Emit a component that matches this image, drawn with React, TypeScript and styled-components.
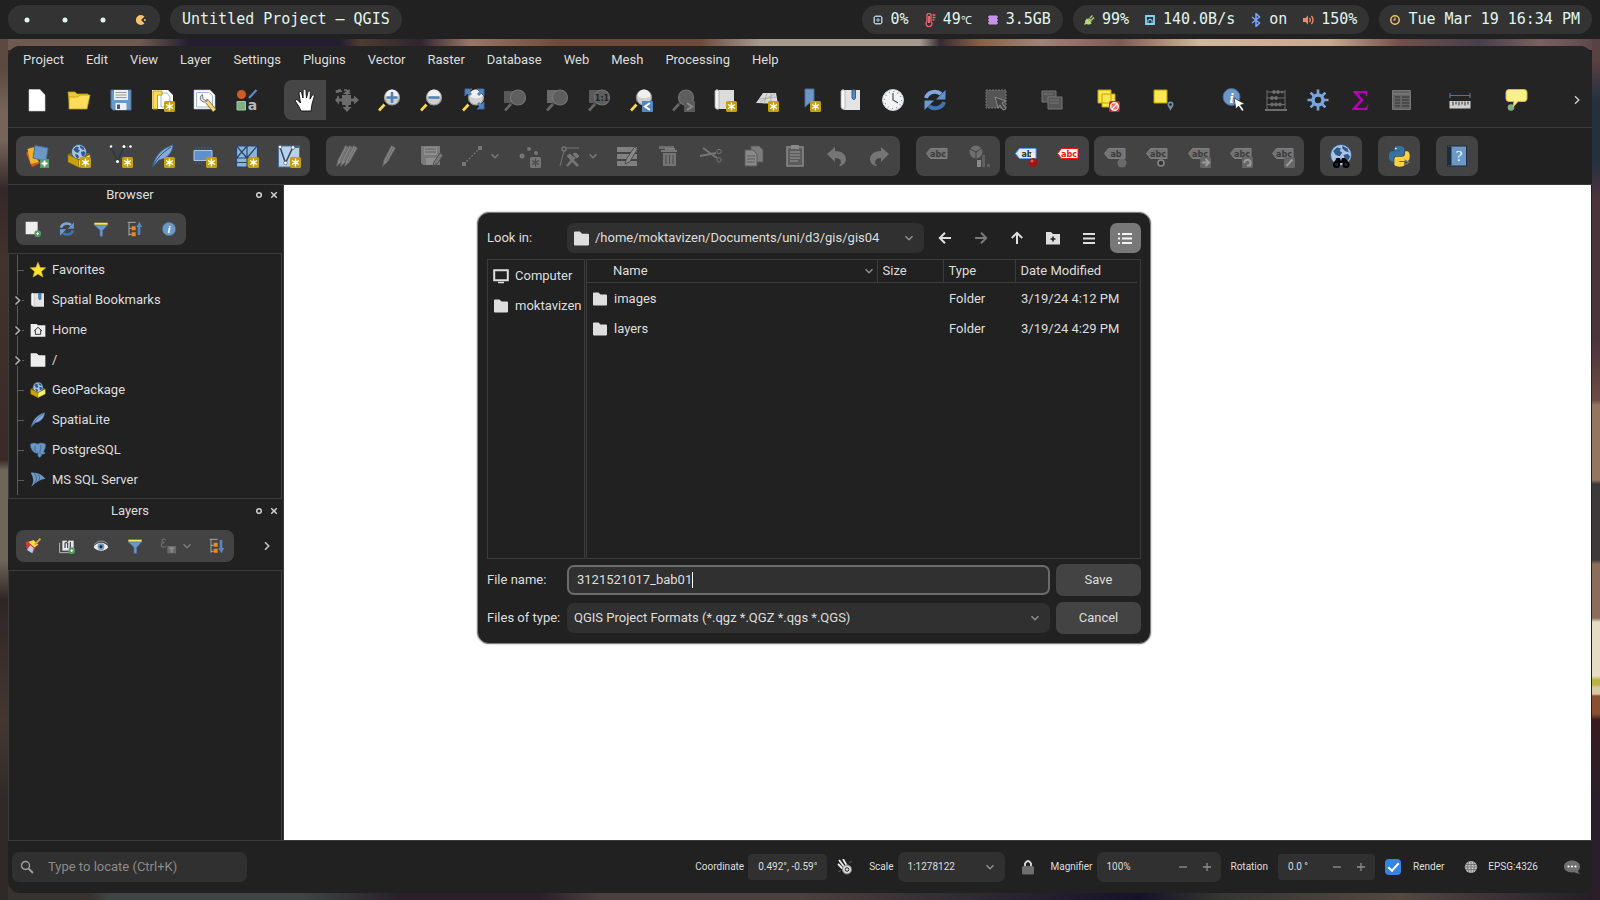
import React, { ReactNode, useState } from "react";
import styled, { createGlobalStyle } from "styled-components";

const UI = 'Roboto, "Open Sans", sans-serif';
const MONO = '"DejaVu Sans Mono", "Liberation Mono", monospace';

const c = {
  base: "#212121",
  raised: "#242424",
  group: "#434343",
  field: "#303030",
  line: "#3c3c3c",
  text: "#dedede",
};

const Global = createGlobalStyle`
  *, *::before, *::after { box-sizing: border-box; }
  body { margin: 0; background: #2c2726; color: ${c.text}; font: 13px/20px ${UI}; }
  button, input, select { font: inherit; color: inherit; margin: 0; }
  ul { list-style: none; margin: 0; padding: 0; }
`;

/* ---------- desktop and top bar ---------- */

const Desktop = styled.div`
  min-height: 100vh;
  display: flex;
  flex-direction: column;
  background:
    linear-gradient(#5a4144 0 60px, #25303f 100px 160px, #4c343c 200px 340px, #6b4c46 400px, #957562 405px 480px, #3d3a3c 484px 560px, #8c6c5c 564px 618px, #e5dcc6 622px 676px, #b8b040 680px 684px, #d8c8a8 688px 694px, #8a5030 696px 714px, #3a1a20 720px, #2a1f28 790px 100%) right / 8px 100% no-repeat,
    linear-gradient(#5c4a40 0 70px, #77635a 110px 140px, #33282a 190px, #43322d 260px, #3a2a28 460px, #6f665a 470px 560px, #2e2626 600px, #443732 720px, #2f2a28 800px 100%) left / 8px 100% no-repeat,
    linear-gradient(90deg, #6f5a52 0 140px, #221d30 190px 340px, #4d3c32 360px, #2e2530 420px, #9a7568 470px, #6d4a3c 560px 700px, #a59a90 760px 920px, #352b33 940px, #8a6046 980px, #a08478 1040px, #7c5a52 1120px, #d0b89c 1200px, #c8a890 1330px, #71504a 1400px, #45404a 1480px, #7b6160 1540px, #59444a 100%) top / 100% 50px no-repeat,
    linear-gradient(90deg, #38322f 0 90px, #3d4644 110px 300px, #2b1f2a 400px 540px, #4a403e 600px, #4b403c 800px, #17122a 1140px, #35352f 1220px, #54483f 1400px, #3a3035 1500px, #251d25 100%);
`;

const TopBar = styled.header`
  display: flex;
  justify-content: space-between;
  height: 39px;
  padding: 5px 8px;
  background: ${c.base};
  color: #e0f6f0;
  font: 15px/29px ${MONO};
`;

const PillRow = styled.div`
  display: flex;
  gap: 10px;
`;

const Pill = styled.div`
  display: flex;
  gap: 14px;
  height: 29px;
  padding: 0 12px 0 9px;
  border-radius: 15px;
  background: #333333;
  white-space: nowrap;
`;

const TitlePill = styled(Pill)`
  padding: 0 12px;
`;

const Workspaces = styled.nav`
  display: grid;
  grid-template-columns: repeat(4, 38px);
  height: 29px;
  border-radius: 15px;
  background: #333333;
`;

const Workspace = styled.button`
  display: grid;
  place-items: center;
  padding: 0;
  border: 0;
  background: none;
`;

const Reading = styled.span`
  display: flex;
  align-items: center;
  gap: 6px;
`;

const Unit = styled.span`
  font-size: 11px;
`;

/* ---------- application window ---------- */

const Window = styled.main`
  position: relative;
  flex: 1;
  display: flex;
  flex-direction: column;
  margin: 7px 8px;
  border-radius: 12px;
  background: ${c.base};
  overflow: hidden;
`;

const WindowHead = styled.div`
  background: ${c.raised};
  border-bottom: 1px solid ${c.line};
`;

const MenuBar = styled.nav`
  display: flex;
  align-items: flex-start;
  padding: 4px 0 0 4px;
  height: 30px;
`;

const MenuItem = styled.button`
  padding: 0 11px;
  border: 0;
  background: none;
  line-height: 20px;
`;

const MainTools = styled.div`
  display: flex;
  gap: 14px;
  height: 51px;
  padding: 4px 8px 7px;
  align-items: flex-start;
`;

const Cluster = styled.div<{ $lead?: number }>`
  display: flex;
  margin-left: ${(p) => p.$lead ?? 0}px;
`;

const EndSlot = styled.div`
  margin-left: auto;
  align-self: center;
`;

const toolWidth = { small: 34, narrow: 14, menu: 56, normal: 42 };

const Tool = styled.button<{ $active?: boolean; $size?: "small" | "narrow" | "menu" }>`
  display: flex;
  align-items: center;
  justify-content: center;
  gap: 6px;
  width: ${(p) => toolWidth[p.$size ?? "normal"]}px;
  height: ${(p) => (p.$size === "small" || p.$size === "narrow" ? 32 : 40)}px;
  padding: 0;
  border: 0;
  border-radius: ${(p) => (p.$active ? "8px 0 0 8px" : "8px")};
  background: ${(p) => (p.$active ? "#464646" : "none")};
`;

const ExpressionTool = styled(Tool)`
  width: 48px;
  height: 32px;
`;

const GroupRow = styled.div`
  display: flex;
  gap: 16px;
  padding: 8px;
  border-bottom: 1px solid ${c.line};
`;

const LabelGroups = styled.div`
  display: flex;
  gap: 5px;
`;

const Group = styled.div`
  display: flex;
  border-radius: 8px;
  background: ${c.group};
`;

const Body = styled.div`
  flex: 1;
  display: flex;
`;

const Side = styled.aside`
  width: 276px;
  flex: none;
  display: flex;
  flex-direction: column;
  padding-right: 1px;
  border-right: 1px solid ${c.line};
`;

const Canvas = styled.section`
  flex: 1;
  margin-right: 1px;
  background: #ffffff;
`;

/* ---------- docks ---------- */

const DockHead = styled.div<{ $tall?: boolean }>`
  display: flex;
  align-items: center;
  gap: 1px;
  height: ${(p) => (p.$tall ? 28 : 31)}px;
  padding: 0 1px 8px 0;
`;

const DockTitle = styled.h2`
  flex: 1;
  margin: 0;
  padding-left: 1px;
  font: 13px/20px ${UI};
  text-align: center;
`;

const DockTools = styled.div`
  display: flex;
  align-items: center;
  padding: 0 8px 8px;
`;

const Tree = styled.ul`
  height: 246px;
  overflow: hidden;
  border: 1px solid ${c.line};
  padding-top: 1px;
`;

const Node = styled.li`
  display: flex;
  align-items: center;
  gap: 6px;
  height: 30px;
  line-height: 20px;
  white-space: nowrap;
`;

const NodeIcon = styled.span`
  display: flex;
`;

const LayerList = styled.div`
  flex: 1;
  border: 1px solid ${c.line};
  border-bottom: 0;
`;

/* ---------- status bar ---------- */

const StatusBar = styled.footer`
  display: flex;
  align-items: center;
  height: 53px;
  padding: 0 12px 0 4px;
  border-top: 1px solid ${c.line};
  font-size: 10px;
`;

const Locator = styled.label`
  display: flex;
  align-items: center;
  gap: 14px;
  width: 235px;
  height: 30px;
  padding: 0 8px;
  border-radius: 7px;
  background: ${c.field};
  font-size: 13px;
`;

const PlainInput = styled.input`
  flex: 1;
  min-width: 0;
  padding: 0;
  border: 0;
  outline: 0;
  background: none;
  &::placeholder { color: #8b8b8b; opacity: 1; }
`;

const StatusItems = styled.div`
  display: flex;
  align-items: center;
  gap: 10px;
  margin-left: auto;
`;

const StatusField = styled.label<{ $lead?: boolean; $wide?: boolean }>`
  display: flex;
  align-items: center;
  gap: ${(p) => (p.$wide ? 10 : 4)}px;
  margin-left: ${(p) => (p.$lead ? 6 : 0)}px;
`;

const StatusBox = styled.span<{ $w: "s" | "m" | "l" | "xl"; $low?: boolean }>`
  display: flex;
  align-items: center;
  width: ${(p) => ({ s: 79, m: 97, l: 107, xl: 124 })[p.$w]}px;
  height: ${(p) => (p.$low ? 26 : 30)}px;
  padding: 0 10px;
  border-radius: ${(p) => (p.$low ? 4 : 7)}px;
  background: ${c.field};
`;

const StepButton = styled.button`
  display: grid;
  place-items: center;
  width: 24px;
  height: 24px;
  padding: 0;
  border: 0;
  background: none;
  &:last-child { margin-right: -8px; }
`;

const GhostButton = styled.button<{ $lead?: number }>`
  display: flex;
  align-items: center;
  gap: 10px;
  padding: 0;
  margin-left: ${(p) => p.$lead ?? 0}px;
  border: 0;
  background: none;
`;

const Check = styled.input`
  appearance: none;
  width: 16px;
  height: 16px;
  border-radius: 4px;
  background: #3584e4;
  display: grid;
  place-items: center;
  &:checked::before {
    content: "";
    width: 11px;
    height: 6px;
    margin-top: -3px;
    border: solid #ffffff;
    border-width: 0 0 2px 2px;
    transform: rotate(-48deg);
  }
`;

const RenderLabel = styled.label`
  display: flex;
  align-items: center;
  gap: 12px;
  margin-right: 10px;
`;

/* ---------- file dialog ---------- */

const Dialog = styled.div`
  position: absolute;
  top: 166px;
  left: 469px;
  width: 674px;
  display: flex;
  flex-direction: column;
  padding: 10px 9px 9px;
  border: 1px solid #808080;
  border-radius: 12px;
  background: ${c.base};
  box-shadow: 0 0 2px rgba(0, 0, 0, 0.4);
`;

const LookRow = styled.div`
  display: flex;
  align-items: center;
  height: 30px;
`;

const RowLabel = styled.label`
  width: 80px;
  white-space: nowrap;
`;

const Combo = styled.div<{ $grow?: boolean }>`
  display: flex;
  align-items: center;
  gap: 6px;
  width: ${(p) => (p.$grow ? "auto" : "357px")};
  height: 30px;
  padding: 0 10px 0 7px;
  border-radius: 7px;
  background: ${c.field};
`;

const Select = styled.select`
  appearance: none;
  flex: 1;
  min-width: 0;
  padding: 0;
  border: 0;
  outline: 0;
  background: none;
`;

const NavButtons = styled.div`
  display: flex;
  flex: 1;
  justify-content: space-between;
  padding-left: 5px;
`;

const NavButton = styled.button<{ $on?: boolean }>`
  display: grid;
  place-items: center;
  width: 31px;
  height: 30px;
  padding: 0;
  border: 0;
  border-radius: 7px;
  background: ${(p) => (p.$on ? "#787878" : "none")};
`;

const Panes = styled.div`
  display: grid;
  grid-template-columns: 98px 1fr;
  gap: 1px;
  height: 300px;
  margin: 6px 0 5px;
`;

const Places = styled.ul`
  border: 1px solid ${c.line};
  padding-top: 1px;
  overflow: hidden;
`;

const Place = styled.li`
  display: flex;
  align-items: center;
  gap: 6px;
  height: 30px;
  padding-left: 5px;
  line-height: 20px;
`;

const PlaceIcon = styled.span`
  display: grid;
  place-items: center;
  width: 16px;
`;

const FilePane = styled.div`
  border: 1px solid ${c.line};
  padding-right: 3px;
`;

const Files = styled.table`
  width: 100%;
  border-collapse: collapse;
  table-layout: fixed;
  line-height: 20px;
`;

const Th = styled.th<{ $w?: number }>`
  width: ${(p) => (p.$w ? `${p.$w}px` : "auto")};
  height: 22px;
  padding: 1px 0 0 5px;
  border-bottom: 1px solid ${c.line};
  border-right: 1px solid ${c.line};
  font-weight: 400;
  text-align: left;
  &:last-child { border-right: 0; }
`;

const NameHead = styled.span`
  display: flex;
  align-items: center;
  justify-content: space-between;
  padding: 0 3px 0 21px;
`;

const Td = styled.td`
  height: 30px;
  padding: 3px 0 0 6px;
  white-space: nowrap;
`;

const FileName = styled.span`
  display: flex;
  align-items: center;
  gap: 7px;
`;

const Form = styled.form`
  display: grid;
  grid-template-columns: 80px 1fr 91px;
  row-gap: 6px;
  align-items: center;
`;

const NameField = styled.div`
  display: flex;
  align-items: center;
  height: 30px;
  padding: 0 8px;
  border: 2px solid #6b6b6b;
  border-radius: 7px;
  background: ${c.field};
`;

const NameInput = styled.input`
  field-sizing: content;
  padding: 0;
  border: 0;
  outline: 0;
  background: none;
`;

const Caret = styled.span`
  width: 1px;
  height: 16px;
  background: #ffffff;
`;

const FormButton = styled.button`
  height: 32px;
  margin-left: 6px;
  border: 0;
  border-radius: 7px;
  background: ${c.group};
`;

/* ---------- icons ---------- */

const Glyph = styled.svg`
  display: block;
  flex: none;
`;

function Ico({ s = 24, h, box = 24, boxH, children }: { s?: number; h?: number; box?: number; boxH?: number; children: ReactNode }) {
  return (
    <Glyph width={s} height={h ?? s} viewBox={`0 0 ${box} ${boxH ?? box}`} fill="none" aria-hidden="true">
      {children}
    </Glyph>
  );
}

const Chevron = ({ dir = "down", color = "#8e8e8e", s = 10 }: { dir?: "down" | "right"; color?: string; s?: number }) => (
  <Ico s={s} box={10}>
    <path d={dir === "down" ? "M1.5 3.2 5 6.7l3.5-3.5" : "M3 1.2 6.8 5 3 8.8"} stroke={color} strokeWidth="1.5" />
  </Ico>
);

const Badge = () => (
  <g>
    <rect x="13" y="13" width="11" height="11" rx="1.5" fill="#c4a000" />
    <path d="M18.5 14.5v8M15 16.5l7 4M22 16.5l-7 4" stroke="#fff" strokeWidth="1.4" />
    <circle cx="18.5" cy="18.5" r="1.9" fill="#fff" />
  </g>
);

const Lens = ({ dim, sign }: { dim?: boolean; sign?: string }) => (
  <g>
    <path d="m2 22.5 6-6.500" stroke={dim ? "#666" : "#fcd94e"} strokeWidth="2.6" />
    <path d="m7.500 16.5 2.500-2.500" stroke={dim ? "#4a4a4a" : "#111"} strokeWidth="2.6" />
    <circle cx="15" cy="9.5" r="7.5" fill={dim ? "#5e5e5e" : "#cfcfcf"} stroke={dim ? "#747474" : "#9b9b9b"} strokeWidth="1.2" />
    {!dim && <path d="M8.500 8a6.500 6.500 0 0 1 13 0c-3 3-9 3-13 0z" fill="#f0f0f0" />}
    {sign && <path d={sign} stroke="#4e7fb5" strokeWidth="2.6" />}
  </g>
);

const Globe = ({ x, y, r }: { x: number; y: number; r: number }) => (
  <g>
    <circle cx={x} cy={y} r={r} fill="#a9c6e6" stroke="#2f4f77" strokeWidth="0.8" />
    <path
      transform={`translate(${x - r} ${y - r}) scale(${r / 8})`}
      d="M2 5l3-3 3 1-1 2 2 1-2 3-3-1zM9 1l4 2 1 3-3-1-2-2zM4 10l3 1 1 3-2 1-2-3zM10 8l3-1 2 2-2 4-2-1z"
      fill="#335a8a"
    />
  </g>
);

const Refresh = () => (
  <g>
    <path d="M3 10a9 8 0 0 1 15-4" stroke="#7fa8d8" strokeWidth="4" />
    <path d="M22.500 2v9.500h-9.500z" fill="#5f92cc" />
    <path d="M21 14a9 8 0 0 1-15 4" stroke="#3d74b4" strokeWidth="4" />
    <path d="M1.500 22v-9.500H11z" fill="#6a9ad2" />
  </g>
);

const Funnel = () => (
  <g>
    <path d="M2 6h20l-7.500 8v9h-4v-9z" fill="#6d97c4" stroke="#45719f" />
    <path d="M2 2.500h20v3H2z" fill="#fce94f" />
  </g>
);

const Info = () => (
  <g>
    <circle cx="12" cy="12" r="10" fill="#6d97c4" stroke="#3f6a9e" />
    <text x="12" y="18" fontSize="17" fontStyle="italic" fontWeight="700" textAnchor="middle" fill="#fff" fontFamily="Liberation Serif">i</text>
  </g>
);

const Folder = ({ color = "#dedede", s = 14 }: { color?: string; s?: number }) => (
  <Ico s={s} box={14}>
    <path d="M0 1.500Q0 .5 1 .5h4.500l2 2H13q1 0 1 1v9q0 1-1 1H1q-1 0-1-1z" fill={color} />
  </Ico>
);

const Feather = () => (
  <g>
    <path d="M1.500 23C4 13 9 5 22 1c-1 8-5 13-14 15z" fill="#86acd6" stroke="#3d6a9c" strokeWidth="0.9" />
    <path d="M1.500 23C6 14 11 9 20 3" stroke="#2c527f" />
  </g>
);

const Gpkg = () => (
  <g>
    <path d="m1 10 11-4 11 4-11 6z" fill="#8a7000" />
    <Globe x={12} y={8} r={7.5} />
    <path d="m1 10.500 11 5.500v7.500L1 18z" fill="#c9a20a" stroke="#8a7000" strokeWidth=".6" />
    <path d="m23 10.500-11 5.500v7.500L23 18z" fill="#fcf36a" stroke="#8a7000" strokeWidth=".6" />
  </g>
);

const Pencil = ({ x = 0 }: { x?: number }) => (
  <g transform={`translate(${x} 0)`}>
    <path d="m4.500 22.500 1.500-6.500L13.500 1.500l4 2.500-8 14z" fill="#868686" stroke="#606060" strokeWidth=".8" />
    <path d="M8 17 15 3.500" stroke="#6a6a6a" />
  </g>
);

const Tag = ({ fill = "#747474", ink = "#3c3c3c", edge = "#808080", label = "abc" }: { fill?: string; ink?: string; edge?: string; label?: string }) => (
  <g>
    <path d="m1.500 9.500 4-5H22v10H5.500z" fill={fill} stroke={edge} />
    <text x="13" y="12.500" fontSize="8" fontWeight="700" textAnchor="middle" fill={ink} fontFamily="DejaVu Sans">{label}</text>
  </g>
);

const Corner = ({ d }: { d: string }) => (
  <g>
    <rect x="13" y="13" width="11" height="11" rx="1.5" fill="#666" />
    <path d={d} stroke="#9c9c9c" strokeWidth="2" />
  </g>
);

const G = "#757575";

const icons: Record<string, ReactNode> = {
  new: <path d="M4 1.500h11L20 7v16H4z" fill="#fff" stroke="#cfcfcf" strokeWidth=".6" />,
  open: (
    <g stroke="#c4a000" strokeWidth=".8">
      <path d="M1 4h7l2 2h11v5H3v9z" fill="#e8c840" />
      <path d="M2 21V9h9l2-2h10l-3 14z" fill="#fcdc5a" />
    </g>
  ),
  save: (
    <g>
      <path d="M2 2h20v20H4l-2-2z" fill="#6d97c4" stroke="#4a719b" />
      <path d="M5 2h14v10H5zM6.500 15h11v7h-11z" fill="#eee" />
      <path d="M6.500 4.500h11M6.500 7h11M6.500 9.500h11" stroke="#9a9a9a" />
      <path d="M8 16.500h3V21H8z" fill="#3b5f88" />
    </g>
  ),
  layout: (
    <g>
      <path d="M1 2h16l5 5v14H1z" fill="#fff" />
      <path d="M10 5h6l3 4v10h-9z" stroke="#9db7dc" />
      <path d="M2 3h9v4H6.500v14H2z" fill="#fcdc5a" stroke="#c4a000" />
      <Badge />
    </g>
  ),
  manager: (
    <g>
      <path d="M1 2h16l5 5v14H1z" fill="#fff" stroke="#bbb" strokeWidth=".6" />
      <path d="M3.500 4.500h13l3 3V19h-16z" stroke="#9db7dc" />
      <path d="M9.500 6.500a4 4 0 1 0 5.500 5l-3 1-2-2z" fill="#ddd" stroke="#777" />
      <path d="m14 13.500 7.500 9" stroke="#8c7020" strokeWidth="4.400" />
      <path d="m14 13.500 7.500 9" stroke="#efd98a" strokeWidth="3" />
    </g>
  ),
  style: (
    <g>
      <circle cx="6.5" cy="6.5" r="4.5" fill="#cf5b26" />
      <path d="m14 10 7.500-8" stroke="#5b8cc5" strokeWidth="2.2" />
      <path d="M2 13.500h8.500v8.500H2z" fill="#7fae80" stroke="#a3c9a4" />
      <text x="17.5" y="22" fontSize="14" fontWeight="700" textAnchor="middle" fill="#b8b8b8" fontFamily="DejaVu Sans">a</text>
    </g>
  ),
  pan: (
    <path
      d="M8 23c-1-3-3-6-5.500-9.500-.6-1.500 1-2.500 2.200-1.300L7.500 15 6 5c-.2-1.800 2-2.200 2.500-.6L10 10l.2-7.500c.2-1.700 2.500-1.700 2.700 0L13.500 10l1.500-6c.5-1.500 2.600-1 2.400.6L17 11l2-3.500c.9-1.300 2.700-.4 2.200 1L19 16l-1 7z"
      fill="#fff" stroke="#111" strokeWidth=".9"
    />
  ),
  pansel: (
    <g fill="#6c6c6c">
      <path d="M7 7h9v10H7z" />
      <path d="M1.500 5v-3h5v2M9 2h5v3M3 8v5H1" stroke="#6c6c6c" strokeDasharray="3 1.500" strokeWidth="1.500" />
      <path d="m12 24-4.500-5h3v-3h3v3h3zM24 12l-5-4.500v3h-3v3h3v3zM0 12l4-4.500v3h3v3H4v3zM12 2l4 4h-3v3h-2V6H8z" />
    </g>
  ),
  zoomin: <Lens sign="M15 4v11M9.5 9.5h11" />,
  zoomout: <Lens sign="M9.5 9.5h11" />,
  zoomfull: (
    <g>
      <Lens />
      <path d="M4 1h7L4 8zM23 1h-7l7 7zM23 21h-7l7-7z" fill="#5586bd" stroke="#3f6a9e" />
      <path d="m6 3 4 4M21 3l-4 4M21 19l-4-4" stroke="#5586bd" strokeWidth="3" />
    </g>
  ),
  zoomsel: <g><path d="M1 3h10v12H1z" fill="#585858" /><Lens dim /></g>,
  zoomlayer: <g><path d="M2 2h10v13H2z" fill="#6a6a6a" /><Lens dim /></g>,
  zoomnative: (
    <g>
      <path d="M2 2h10v13H2z" fill="#5a5a5a" /><Lens dim />
      <text x="15" y="12.500" fontSize="8" fontWeight="700" textAnchor="middle" fill="#262626" fontFamily="DejaVu Sans">1:1</text>
    </g>
  ),
  zoomlast: <g><Lens /><rect x="13" y="13" width="11" height="11" fill="#5586bd" /><path d="m21 15-5 3.500 5 3.500" stroke="#fff" strokeWidth="2" /></g>,
  zoomnext: <g><Lens dim /><rect x="13" y="13" width="11" height="11" fill="#5a5a5a" /><path d="m16 15 5 3.500-5 3.500" stroke="#8a8a8a" strokeWidth="2" /></g>,
  newmap: <g><path d="M3 2h18v19H5L2 18V3z" fill="#dcdcdc" /><path d="M2 3q2-3 4 0v18q-4 1-4-3z" fill="#f4f4f4" stroke="#aaa" strokeWidth=".8" /><Badge /></g>,
  new3d: <g><path d="M8 5h13l2 11-22-1z" fill="#dadada" /><path d="M12 5 9 16M16 5v11M4 11l18-2M5 14 20 6" stroke="#a5a5a5" strokeWidth=".8" /><Badge /></g>,
  newbm: <g><path d="M8 1h9v18l-4.500-4L8 19z" fill="#6d97c4" stroke="#45719f" /><Badge /></g>,
  bookmarks: <g><path d="M3 2h18v20H5l-3-3V3z" fill="#e4e4e4" /><path d="M2 3q2-3 4 0v18q-4 1-4-3z" fill="#f8f8f8" stroke="#aaa" strokeWidth=".8" /><path d="M13 2h3.500v8l-1.700 2L13 10z" fill="#5586bd" stroke="#34608f" /></g>,
  clock: (
    <g>
      <circle cx="12" cy="12" r="10.5" fill="#f3f3f3" stroke="#cfcfcf" />
      <circle cx="12" cy="12" r="8.5" stroke="#6d97c4" strokeWidth="1.2" strokeDasharray="1 3.450" />
      <path d="M12 5v7l5 3" stroke="#555" strokeWidth="1.2" />
    </g>
  ),
  refresh: <Refresh />,
  select: <g><path d="M2 2h20v18H2z" fill="#555" stroke="#777" strokeDasharray="2 1" /><path d="m11 9 11 4-4 2 4 6-3 1-3-5-2 3z" fill="#444" stroke="#8a8a8a" /></g>,
  selval: <g fill="#555" stroke="#777"><path d="M2 3h14v11H2z" /><path d="M8 9h14v12H8z" /><path d="M10 12h9M10 15h9M4 6h9" /></g>,
  deselect: (
    <g>
      <path d="M2 2h13v13H2zM6 6h13v13H6z" fill="#fce94f" stroke="#c4a000" />
      <rect x="13" y="13" width="11" height="11" rx="2" fill="#d42a2a" />
      <circle cx="18.5" cy="18.5" r="3.8" stroke="#fff" strokeWidth="1.3" fill="#e87070" /><path d="m16 21 5-5" stroke="#fff" strokeWidth="1.3" />
    </g>
  ),
  selloc: <g><path d="M2 2h13v13H2z" fill="#fce94f" stroke="#c4a000" /><path d="M18.500 23c-1-3-3-4-3-6.500a3 3 0 0 1 6 0c0 2.500-2 3.500-3 6.500z" fill="#6d8ea6" /><circle cx="18.5" cy="16.5" r="1.3" fill="#222" /></g>,
  identify: (
    <g>
      <circle cx="9.5" cy="9" r="8.5" fill="#6d97c4" stroke="#3f6a9e" />
      <text x="9.5" y="14.5" fontSize="15" fontStyle="italic" fontWeight="700" textAnchor="middle" fill="#fff" fontFamily="Liberation Serif">i</text>
      <path d="m12 10 11 6-4.500 1 3.500 5-2 1.300-3.500-5.300L14 21z" fill="#fff" stroke="#222" strokeWidth=".7" />
    </g>
  ),
  abacus: (
    <g stroke="#6e6e6e">
      <path d="M3 2v20M21 2v20M3 4h18M3 10h18M3 16.500h18" /><path d="M1 22h22" strokeWidth="2" />
      <g fill="#6e6e6e"><circle cx="10" cy="4" r="1.5" /><circle cx="14" cy="4" r="1.5" /><circle cx="18" cy="4" r="1" /><circle cx="8" cy="10" r="1.5" /><circle cx="12" cy="10" r="1.5" /><circle cx="8" cy="16.5" r="1.5" /><circle cx="12" cy="16.5" r="1.5" /><circle cx="16" cy="16.5" r="1.5" /></g>
    </g>
  ),
  gear: (
    <g stroke="#7aa4dc">
      <circle cx="12" cy="12" r="5" strokeWidth="3.6" />
      <path d="M12 1.500v5M12 17.500v5M1.500 12h5M17.500 12h5M4.600 4.600l3.500 3.500M15.900 15.900l3.500 3.500M4.600 19.400l3.500-3.500M15.900 8.100l3.500-3.500" strokeWidth="2.6" />
    </g>
  ),
  sigma: <path d="M5 3h14v5h-1c-.5-2.500-1.500-3-4-3H9.500l6 7-7 8H15c3 0 4-1 4.500-3.500h1L19 22H4v-1l8-9-7-8z" fill="#b400b4" />,
  table: (
    <g>
      <path d="M2.500 2.500h18v19h-18z" fill="#636363" stroke="#777" /><path d="M3 6h17" stroke="#888" />
      <path d="M5 9h5M12 9h7M5 12h5M12 12h7M5 15h5M12 15h7M5 18h5M12 18h7" stroke="#333" strokeWidth="1.2" />
    </g>
  ),
  measure: (
    <g>
      <path d="M2 7.500h20M2 5v5M22 5v5" stroke="#4a75a8" strokeWidth="1.2" />
      <path d="M1.500 13h21v7.500h-21z" fill="#cfcfcf" /><path d="M5 13.500v4M8 13.500v3M11 13.500v4M14 13.500v3M17 13.500v4M20 13.500v3" stroke="#333" />
    </g>
  ),
  tips: <g><circle cx="7" cy="19.5" r="3.3" fill="#7fae80" /><path d="M5 1.500h15q3 0 3 3v6q0 3-3 3h-6L9 19l1-5.500H5q-3 0-3-3v-6q0-3 3-3z" fill="#fbf18c" stroke="#d8bb20" /></g>,
  datasource: (
    <g>
      <path d="m1 9 5-3 9 13-8 4z" fill="#cf5b26" /><path d="m2.500 5 6-2 5 15-8 2z" fill="#f0b428" />
      <path d="m10 1.500 13 2.500-2 13L8 14z" fill="#6d97c4" stroke="#45719f" />
      <rect x="15" y="15" width="9" height="9" fill="#5b9a68" /><path d="M19.500 16.500v6M16.500 19.500h6" stroke="#fff" strokeWidth="2" />
    </g>
  ),
  gpkg: <g><Gpkg /><Badge /></g>,
  shape: <g><path d="m2 3 6.500 14L15 3" stroke="#22384f" strokeWidth="1.4" /><path d="M15 3h7" stroke="#888" strokeDasharray="1 2" /><g fill="#fff"><circle cx="2" cy="2.5" r="1.3" /><circle cx="8.5" cy="17.5" r="1.5" /><circle cx="15" cy="2.5" r="1.5" /><circle cx="21.5" cy="2.5" r="1.3" /></g><Badge /></g>,
  spatialite: <g><Feather /><Badge /></g>,
  memory: <g><path d="M3 3v3M6 3v3M9 3v3M12 3v3M15 3v3M18 3v3M3 16v4M6 16v4M9 16v4" stroke="#3b5f88" /><path d="M1 6.500h18v10H1z" fill="#5f90cc" stroke="#a8c6ea" /><Badge /></g>,
  mesh: <g><path d="M1.500 2h21v21h-21z" fill="#8fb4dc" stroke="#24456c" strokeWidth="1.2" /><path d="M1.500 14h21M12 2v21M1.500 2 12 14M12 2 1.500 14M22 2 12 14M1.500 18.500H12" stroke="#24456c" strokeWidth="1.2" /><Badge /></g>,
  virtual: <g><path d="M1.500 2h21v21h-21z" fill="#b8d0ea" stroke="#45719f" /><path d="m3 3 5.500 16L16 3h6" stroke="#33475c" strokeWidth="1.5" /><g fill="#fff" stroke="#33475c" strokeWidth=".6"><circle cx="3" cy="3" r="1.8" /><circle cx="8.5" cy="19" r="1.8" /><circle cx="16" cy="3.5" r="1.8" /></g><Badge /></g>,
  edits: <g><Pencil x={-3} /><Pencil x={1} /><Pencil x={5} /></g>,
  pencil: <Pencil x={1} />,
  saveedit: <g><path d="M2 2h19v19H4l-2-2z" fill="#7a7a7a" /><path d="M5 3h13v8H5zM7 14h10v7H7z" fill="#8f8f8f" /><path d="M6 5h11M6 8h11" stroke="#5c5c5c" /><path d="m14 22 1-4 6-9 3 2-6 9z" fill="#7c7c7c" stroke="#4c4c4c" /></g>,
  line: <g><path d="M4 20 20 4" stroke={G} strokeDasharray="2 1.500" strokeWidth="1.2" /><path d="M2 18h4v4H2zM18 2h4v4h-4z" fill={G} /></g>,
  points: <g fill={G}><circle cx="5" cy="12" r="2.5" /><circle cx="12" cy="5" r="2" /><circle cx="19" cy="9" r="2" /><rect x="13" y="13" width="11" height="11" rx="1.5" /><path d="M18.500 14.500v8M15 16.500l7 4M22 16.500l-7 4" stroke="#4a4a4a" strokeWidth="1.3" /></g>,
  vertex: (
    <g stroke={G}>
      <path d="M2 22 6 7M8 4h13" /><circle cx="6" cy="5" r="2" strokeWidth="1.500" />
      <path d="m12 14 8 8M9 22l8-9" strokeWidth="2.500" /><path d="m9 12 3-2 3 3-2 3zM15 10l3-1 3 3-2 2z" fill={G} />
    </g>
  ),
  multi: <g><path d="M2 3h20v5H2zM2 10h20v5H2zM2 17h20v5H2z" fill="#808080" /><path d="m10 20 1.500-5 8-12 3 2-8 13z" fill="#8a8a8a" stroke="#4c4c4c" /></g>,
  trash: <g><path d="M2 2h15v3H2z" fill="#6e6e6e" /><path d="M4 7h16M8 5h10" stroke="#8a8a8a" strokeWidth="1.5" /><path d="M6 9h13v13H6z" fill={G} /><path d="M9 11v9M12.500 11v9M16 11v9" stroke="#4c4c4c" /></g>,
  cut: <g stroke={G}><path d="m4 4 14 10M1 12l16-3" strokeWidth="2" /><circle cx="20" cy="7.5" r="2.2" /><circle cx="20" cy="16" r="2.2" /></g>,
  copy: <g fill="#7c7c7c" stroke="#5a5a5a"><path d="M10 2h8l4 4v12H10z" /><path d="M4 6h8l4 4v12H4z" fill="#8a8a8a" /><path d="M6 12h8M6 15h8M6 18h8" /></g>,
  paste: <g><path d="M4 3h16v19H4z" fill="#5c5c5c" stroke="#8a8a8a" strokeWidth="1.5" /><path d="M8 1h8v4H8z" fill="#8a8a8a" /><path d="M7 8h10M7 11h10M7 14h10M7 17h8" stroke="#9a9a9a" /></g>,
  undo: <path d="m2 10 8-7v4c8 0 11 4 11 9-1 4-4 6-7 6 3-3 3-8-4-8v4z" fill={G} />,
  redo: <path d="m22 10-8-7v4C6 7 3 11 3 16c1 4 4 6 7 6-3-3-3-8 4-8v4z" fill={G} />,
  label: <Tag />,
  diagram: <g fill="#6e6e6e"><circle cx="9" cy="8" r="6.5" /><path d="m9 8-6-3M9 8l6-4M9 8v6" stroke="#434343" /><path d="M10 16h4v7h-4z" fill="#8a8a8a" /><path d="M15 11h3v12h-3zM20 20h3v3h-3z" fill="#606060" /></g>,
  pin: <g><Tag fill="#dcebfa" edge="#5b9cf0" ink="#333" label="ab" /><path d="M17 9h3v8h-3z" fill="#eee" /><circle cx="19" cy="18.5" r="4.5" fill="#a31515" /><circle cx="18" cy="17" r="1.5" fill="#d86060" /></g>,
  unplaced: <Tag fill="#ffffff" edge="#ff1010" ink="#ff1010" />,
  tagpin: <g><Tag label="ab" /><circle cx="19" cy="19" r="4.5" fill="#6a6a6a" /></g>,
  tagshow: <g><Tag /><circle cx="16" cy="19" r="3" stroke="#888" strokeWidth="1.6" fill="#333" /></g>,
  tagmove: <g><Tag /><Corner d="M15 18.500h7M18.500 15l3.500 3.500-3.500 3.500" /></g>,
  tagrotate: <g><Tag /><Corner d="M15.500 19a3 3 0 1 1 4 2.500M22 21.500h-4" /></g>,
  tagedit: <g><Tag /><Corner d="m15.500 22 6-6.500" /></g>,
  metasearch: (
    <g>
      <Globe x={12} y={11} r={10.5} />
      <g fill="#222" stroke="#000" strokeWidth="1.8"><circle cx="7.5" cy="20.500" r="2.6" /><circle cx="17" cy="20.500" r="2.6" /></g>
      <path d="m4.500 19 3.500-5h3l1 3 1-3h3l4 5z" fill="#000" />
    </g>
  ),
  python: (
    <g transform="translate(2 2) scale(.86)">
      <path fill="#3673a5" d="M14.250.18l.9.2.73.26.59.3.45.32.34.34.25.34.16.33.1.3.04.26.02.2-.01.13V8.500l-.05.63-.13.55-.21.46-.26.38-.3.31-.33.25-.35.19-.35.14-.33.1-.3.07-.26.04-.21.02H8.770l-.69.05-.59.14-.5.22-.41.27-.33.32-.27.35-.2.36-.15.37-.1.35-.07.32-.04.27-.02.21v3.060H3.170l-.21-.03-.28-.07-.32-.12-.35-.18-.36-.26-.36-.36-.35-.46-.32-.59-.28-.73-.21-.88-.14-1.050-.05-1.230.06-1.220.16-1.040.24-.87.32-.71.36-.57.4-.44.42-.33.42-.24.4-.16.36-.1.32-.05.24-.01h.16l.06.01h8.160v-.83H6.180l-.01-2.750-.02-.37.05-.34.11-.31.17-.28.25-.26.31-.23.38-.2.44-.18.51-.15.58-.12.64-.1.71-.06.77-.04.84-.02 1.270.05z" />
      <path fill="#ffd140" d="M21.100 6.110l.28.06.32.12.35.18.36.27.36.35.35.47.32.59.28.73.21.88.14 1.040.05 1.230-.06 1.230-.16 1.040-.24.86-.32.71-.36.57-.4.45-.42.33-.42.24-.4.16-.36.09-.32.05-.24.02-.16-.01h-8.220v.82h5.840l.01 2.760.02.36-.05.34-.11.31-.17.29-.25.25-.31.24-.38.2-.44.17-.51.15-.58.13-.64.09-.71.07-.77.04-.84.01-1.270-.04-1.070-.14-.9-.2-.73-.25-.59-.3-.45-.33-.34-.34-.25-.34-.16-.33-.1-.3-.04-.25-.02-.2.01-.13v-5.340l.05-.64.13-.54.21-.46.26-.38.3-.32.33-.24.35-.2.35-.14.33-.1.3-.06.26-.04.21-.02.13-.01h5.840l.69-.05.59-.14.5-.21.41-.28.33-.32.27-.35.2-.36.15-.36.1-.35.07-.32.04-.28.02-.21V6.070h2.090l.14.01z" />
      <circle cx="8" cy="2.9" r="1" fill="#fff" /><path d="m18 16 5 3-5 3" stroke="#777" strokeWidth="1.5" />
    </g>
  ),
  help: <g><path d="M2.500 2h19v20h-19z" fill="#6d97c4" stroke="#1c2c40" /><path d="M3 2.500h3.500v19H3z" fill="#1c2c40" /><text x="14" y="17" fontSize="15" textAnchor="middle" fill="#fff" fontFamily="Liberation Serif">?</text></g>,
};

const I = ({ n, s }: { n: string; s?: number }) => <Ico s={s}>{icons[n]}</Ico>;

const small: Record<string, ReactNode> = {
  add: <g><path d="M1 1h18v19H1z" fill="#eee" /><circle cx="19" cy="19" r="5" fill="#5b9a68" /><path d="M19 17v4M17 19h4" stroke="#fff" strokeWidth="1.5" /></g>,
  refresh: <Refresh />,
  funnel: <Funnel />,
  collapse: <g><path d="M1 2h12M3 2v20M3 11h4M3 20h4" stroke="#aaa" strokeWidth="1.5" /><path d="M7 8h6v6H7zM7 17h6v6H7z" fill="#f08a1c" /><path d="M14 9 18.500 1 23 9h-3v12h-4V9z" fill="#5586bd" /></g>,
  expand: <g><path d="M1 2h12M3 2v20M3 11h4M3 20h4" stroke="#aaa" strokeWidth="1.5" /><path d="M7 7h6v6H7zM7 16h6v6H7z" fill="#f08a1c" /><path d="M14 15 18.500 23 23 15h-3V3h-4v12z" fill="#5586bd" /></g>,
  info: <Info />,
  brush: <g><path d="m1 6 9-2 8 7-6 11-9-5z" fill="#d93a2e" /><path d="m5 6 8-3 7 7-6 4z" fill="#fcd94e" /><path d="m3 18 5-7 5 4-2 8z" fill="#b9cdea" /><path d="m15 10 8-9" stroke="#d8a03c" strokeWidth="3" /></g>,
  group: <g><path d="M1 7v15h14" stroke="#bbb" strokeWidth="1.5" /><path d="M5 4h17v15H5z" fill="#e8e8e8" /><path d="M9 15V8q2-3 4 0v7M17 6v10M13 1v5" stroke="#445" strokeWidth="1.8" /><circle cx="19" cy="19" r="5" fill="#5b9a68" /><path d="M19 17v4M17 19h4" stroke="#fff" strokeWidth="1.5" /></g>,
  eye: <g><path d="M1 14C5 5 19 5 23 14c-5 7-17 7-22 0z" fill="#eee" /><path d="M2 10C7 3 17 3 22 9" stroke="#999" strokeWidth="1.5" /><circle cx="12" cy="13" r="5" fill="#6d97c4" /><circle cx="12" cy="13" r="2" fill="#222" /></g>,
  star: <path d="m12 .500 3.200 7.800 8.300.5-6.400 5.400 2.200 8.300L12 18l-7.300 4.500 2.200-8.300L.500 8.800l8.300-.5z" fill="#fce03c" stroke="#d8b60a" />,
  bookmarks: icons.bookmarks,
  home: <g><path d="M1 3h9l2 2h11v17H1z" fill="#eee" /><path d="m6 13.500 6-5.500 6 5.500M8 12.500v6h8v-6" stroke="#333" strokeWidth="1.5" /></g>,
  root: <path d="M1 2h9l3 3h10v17H1z" fill="#eee" />,
  gpkg: <Gpkg />,
  feather: <Feather />,
  elephant: <g><path d="M1 3q5-3 10 0 6-3 12 0 1 6-3 12l3 1q-2 3-6 2v3q-3 4-5 0v-5l-2 1q-5-1-7-5-3-5-2-9z" fill="#6d97c4" stroke="#45719f" /><path d="M8 6q-2 5 1 9M16 5q2 5-1 8v5" stroke="#2f527d" /></g>,
  mssql: <g><path d="M1 1q14-1 22 9-10 1-21 12Q8 11 1 1z" fill="#6d97c4" /><path d="M7 2q5 8 0 15M13 4q3 5 0 9" stroke="#2f527d" /></g>,
};

const S = ({ n, s = 16 }: { n: string; s?: number }) => <Ico s={s}>{small[n]}</Ico>;

/* ---------- content ---------- */

const menus = ["Project", "Edit", "View", "Layer", "Settings", "Plugins", "Vector", "Raster", "Database", "Web", "Mesh", "Processing", "Help"];

const mainClusters: { lead?: number; tools: [string, string][] }[] = [
  { tools: [["new", "New Project"], ["open", "Open Project"], ["save", "Save Project"], ["layout", "New Print Layout"], ["manager", "Layout Manager"], ["style", "Style Manager"]] },
  { lead: 2, tools: [["pan", "Pan Map"], ["pansel", "Pan to Selection"], ["zoomin", "Zoom In"], ["zoomout", "Zoom Out"], ["zoomfull", "Zoom Full"], ["zoomsel", "Zoom to Selection"], ["zoomlayer", "Zoom to Layer"], ["zoomnative", "Zoom to Native Resolution"], ["zoomlast", "Zoom Last"], ["zoomnext", "Zoom Next"], ["newmap", "New Map View"], ["new3d", "New 3D Map View"], ["newbm", "New Spatial Bookmark"], ["bookmarks", "Show Spatial Bookmarks"], ["clock", "Temporal Controller"], ["refresh", "Refresh"]] },
  { lead: 5, tools: [["select", "Select Features"]] },
  { tools: [["selval", "Select by Value"]] },
  { tools: [["deselect", "Deselect Features"]] },
  { tools: [["selloc", "Select by Location"]] },
  { lead: 14, tools: [["identify", "Identify Features"], ["abacus", "Field Calculator"], ["gear", "Toolbox"], ["sigma", "Statistical Summary"], ["table", "Attribute Table"]] },
  { lead: 2, tools: [["measure", "Measure Line"]] },
  { tools: [["tips", "Map Tips"]] },
];

const layerTools: [string, string][] = [["datasource", "Data Source Manager"], ["gpkg", "New GeoPackage Layer"], ["shape", "New Shapefile Layer"], ["spatialite", "New SpatiaLite Layer"], ["memory", "New Temporary Layer"], ["mesh", "New Mesh Layer"], ["virtual", "New Virtual Layer"]];
const editTools: [string, string, boolean?][] = [["edits", "Current Edits"], ["pencil", "Toggle Editing"], ["saveedit", "Save Edits"], ["line", "Add Line", true], ["points", "Add Point"], ["vertex", "Vertex Tool", true], ["multi", "Modify Attributes"], ["trash", "Delete Selected"], ["cut", "Cut"], ["copy", "Copy"], ["paste", "Paste"], ["undo", "Undo"], ["redo", "Redo"]];
const labelGroups: [string, string][][] = [
  [["label", "Layer Labeling"], ["diagram", "Layer Diagram"]],
  [["pin", "Highlight Pinned Labels"], ["unplaced", "Show Unplaced Labels"]],
  [["tagpin", "Pin Labels"], ["tagshow", "Show Labels"], ["tagmove", "Move Label"], ["tagrotate", "Rotate Label"], ["tagedit", "Change Label"]],
];
const lastTools: [string, string][] = [["metasearch", "MetaSearch"], ["python", "Python Console"], ["help", "Help Contents"]];

const nodes: { icon: string; label: string; open?: boolean }[] = [
  { icon: "star", label: "Favorites" },
  { icon: "bookmarks", label: "Spatial Bookmarks", open: true },
  { icon: "home", label: "Home", open: true },
  { icon: "root", label: "/", open: true },
  { icon: "gpkg", label: "GeoPackage" },
  { icon: "feather", label: "SpatiaLite" },
  { icon: "elephant", label: "PostgreSQL" },
  { icon: "mssql", label: "MS SQL Server" },
];

const files = [
  { name: "images", type: "Folder", date: "3/19/24 4:12 PM" },
  { name: "layers", type: "Folder", date: "3/19/24 4:29 PM" },
];

const ToolGroup = ({ tools }: { tools: [string, string, boolean?][] }) => (
  <Group>
    {tools.map(([n, label, menu]) => (
      <Tool key={n} aria-label={label} $size={menu ? "menu" : undefined}>
        <I n={n} />
        {menu && <Chevron color="#7a7a7a" />}
      </Tool>
    ))}
  </Group>
);

const Branch = ({ open }: { open?: boolean }) => (
  <Ico s={15} h={30} box={15} boxH={30}>
    <path d={open ? "M8.500 0v10M8.500 21v9M13 15.500h4" : "M8.500 0v30M8.500 15.500H17"} stroke="#5a5a5a" />
    {open && <path d="m6.500 11.500 4 4-4 4" stroke="#b4b4b4" strokeWidth="1.5" />}
  </Ico>
);

const DockButtons = () => (
  <>
    <Tool $size="narrow" aria-label="Float"><Ico s={8} box={8}><circle cx="4" cy="4" r="2.3" stroke="#d0d0d0" strokeWidth="1.5" /></Ico></Tool>
    <Tool $size="narrow" aria-label="Close"><Ico s={8} box={8}><path d="m1.200 1.200 5.600 5.600M6.800 1.200 1.200 6.800" stroke="#d0d0d0" strokeWidth="1.5" /></Ico></Tool>
  </>
);

const Steps = ({ what }: { what: string }) => (
  <>
    <StepButton aria-label={`Decrease ${what}`}><Ico s={10} box={10}><path d="M1 5h8" stroke="#8e8e8e" strokeWidth="1.3" /></Ico></StepButton>
    <StepButton aria-label={`Increase ${what}`}><Ico s={10} box={10}><path d="M1 5h8M5 1v8" stroke="#8e8e8e" strokeWidth="1.3" /></Ico></StepButton>
  </>
);

const readings: { icon: ReactNode; text: string; unit?: string }[][] = [
  [
    { text: "0%", icon: <g stroke="#a9cbd6"><path d="M3.500 3.500h7v7h-7zM6 6h2v2H6zM5 2v1.500M7 2v1.500M9 2v1.500M5 10.500V12M7 10.500V12M9 10.500V12M2 5h1.500M2 7h1.500M2 9h1.500M10.500 5H12M10.500 7H12M10.500 9H12" /></g> },
    { text: "49", unit: "℃", icon: <g stroke="#e8676b" strokeWidth="1.3"><path d="M4 8.500V1.500Q6-1 8 1.500v7a3 3 0 1 1-4 0z" /><path d="M6 3v7" strokeWidth="2" /><path d="M9.500 2h3M9.500 4.500h3M9.500 7h2" /></g> },
    { text: "3.5GB", icon: <g><path d="M3 2.500h8v9H3z" fill="#c792ea" /><path d="M2 4h10M2 7h10M2 10h10" stroke="#c792ea" strokeWidth="1.5" /></g> },
  ],
  [
    { text: "99%", icon: <g stroke="#b5dd7c"><path d="m2.500 11.500 2-2M8 5l2.500-2.500M9.500 7 12 4.500" strokeWidth="1.3" /><path d="m5 6.500 3.500 3.500q-2.500 1.500-4 0t.5-3.500zM6.500 5.500l3 3" strokeWidth="1.6" fill="#b5dd7c" /></g> },
    { text: "140.0B/s", icon: <g><path d="M3 3h8v8H3z" stroke="#7fd4fa" strokeWidth="1.8" /><path d="M5 10V7h1.500V6h1v1H9v3" stroke="#7fd4fa" /></g> },
    { text: "on", icon: <path d="m3 4 7.500 6L7 13.500V.5L10.500 4 3 10" stroke="#7ba4f7" strokeWidth="1.5" /> },
    { text: "150%", icon: <g><path d="M2 5h2.500L7 2.500v9L4.500 9H2z" fill="#f28b6c" /><path d="M8.500 5q1.500 2 0 4M10.500 3q3 4 0 8" stroke="#f28b6c" strokeWidth="1.3" /></g> },
  ],
  [{ text: "Tue Mar 19 16:34 PM", icon: <g stroke="#f3c364" strokeWidth="1.5"><circle cx="7" cy="7" r="4.2" /><path d="M7 4.500V7h-2" strokeWidth="1.2" /></g> }],
];

function FilterExpression() {
  return (
    <ExpressionTool aria-label="Filter by expression">
      <Ico s={16}>
        <path d="M9 3Q3 0 3 4q0 3 4 3-5 0-5 4t7 2" stroke="#6a6a6a" strokeWidth="2" />
        <path d="M11 12h13v11H11z" fill="#6a6a6a" />
        <path d="M13 14h9l-3 4v4h-3v-4z" fill="#8c8c8c" />
      </Ico>
      <Chevron color="#7a7a7a" />
    </ExpressionTool>
  );
}

function FileDialog() {
  const [name, setName] = useState("3121521017_bab01");
  return (
    <Dialog role="dialog" aria-label="Save project as">
      <LookRow>
        <RowLabel htmlFor="look">Look in:</RowLabel>
        <Combo>
          <Folder s={15} />
          <Select id="look"><option>/home/moktavizen/Documents/uni/d3/gis/gis04</option></Select>
          <Chevron />
        </Combo>
        <NavButtons>
          <NavButton aria-label="Back"><Ico s={14} box={14}><path d="M13 7H2M7 1.800 1.800 7 7 12.200" stroke="#dedede" strokeWidth="2" /></Ico></NavButton>
          <NavButton aria-label="Forward"><Ico s={14} box={14}><path d="M1 7h11M7 1.800 12.200 7 7 12.200" stroke="#7a7a7a" strokeWidth="2" /></Ico></NavButton>
          <NavButton aria-label="Parent folder"><Ico s={14} box={14}><path d="M7 13V2M1.800 7 7 1.800 12.200 7" stroke="#dedede" strokeWidth="2" /></Ico></NavButton>
          <NavButton aria-label="New folder"><Ico s={14} box={14}><path d="M0 1h5l2 2h7v10.500H0z" fill="#dedede" /><path d="M7 5.500v5M4.500 8h5" stroke="#212121" strokeWidth="1.6" /></Ico></NavButton>
          <NavButton aria-label="List view"><Ico s={14} box={14}><path d="M1 3h12M1 7.500h12M1 12h12" stroke="#dedede" strokeWidth="2" /></Ico></NavButton>
          <NavButton aria-label="Detail view" $on><Ico s={14} box={14}><path d="M4 3h10M4 7.500h10M4 12h10M0 3h2M0 7.500h2M0 12h2" stroke="#f4f4f4" strokeWidth="2" /></Ico></NavButton>
        </NavButtons>
      </LookRow>
      <Panes>
        <Places>
          <Place><PlaceIcon><Ico s={16} box={16}><path d="M1.200 2.200h13.600v10H1.200z" stroke="#dedede" strokeWidth="2" /><path d="M5 14.500h6" stroke="#dedede" strokeWidth="1.5" /></Ico></PlaceIcon>Computer</Place>
          <Place><PlaceIcon><Folder /></PlaceIcon>moktavizen</Place>
        </Places>
        <FilePane>
          <Files>
            <thead>
              <tr>
                <Th><NameHead>Name<Chevron /></NameHead></Th>
                <Th $w={66}>Size</Th>
                <Th $w={72}>Type</Th>
                <Th $w={122}>Date Modified</Th>
              </tr>
            </thead>
            <tbody>
              {files.map((f) => (
                <tr key={f.name}>
                  <Td><FileName><Folder />{f.name}</FileName></Td>
                  <Td />
                  <Td>{f.type}</Td>
                  <Td>{f.date}</Td>
                </tr>
              ))}
            </tbody>
          </Files>
        </FilePane>
      </Panes>
      <Form onSubmit={(e) => e.preventDefault()}>
        <RowLabel htmlFor="fname">File name:</RowLabel>
        <NameField>
          <NameInput id="fname" value={name} onChange={(e) => setName(e.target.value)} />
          <Caret />
        </NameField>
        <FormButton type="submit">Save</FormButton>
        <RowLabel htmlFor="ftype">Files of type:</RowLabel>
        <Combo $grow>
          <Select id="ftype"><option>QGIS Project Formats (*.qgz *.QGZ *.qgs *.QGS)</option></Select>
          <Chevron />
        </Combo>
        <FormButton type="button">Cancel</FormButton>
      </Form>
    </Dialog>
  );
}

export default function App() {
  return (
    <Desktop>
      <Global />
      <TopBar>
        <PillRow>
          <Workspaces aria-label="Workspaces">
            {[1, 2, 3].map((n) => (
              <Workspace key={n} aria-label={`Workspace ${n}`}><Ico s={6} box={6}><circle cx="3" cy="3" r="2.5" fill="#e0f6f0" /></Ico></Workspace>
            ))}
            <Workspace aria-label="Workspace 4"><Ico s={10} box={10}><path d="M8.500 1.500A5 5 0 1 0 8.500 8.500L5 5z" fill="#f9c46b" /><circle cx="8.8" cy="5" r="1" fill="#f9c46b" /></Ico></Workspace>
          </Workspaces>
          <TitlePill>Untitled Project — QGIS</TitlePill>
        </PillRow>
        <PillRow>
          {readings.map((group, i) => (
            <Pill key={i}>
              {group.map((r) => (
                <Reading key={r.text}>
                  <Ico s={14} box={14}>{r.icon}</Ico>
                  <span>{r.text}{r.unit && <Unit>{r.unit}</Unit>}</span>
                </Reading>
              ))}
            </Pill>
          ))}
        </PillRow>
      </TopBar>

      <Window>
        <WindowHead>
          <MenuBar>{menus.map((m) => <MenuItem key={m}>{m}</MenuItem>)}</MenuBar>
          <MainTools>
            {mainClusters.map((g, i) => (
              <Cluster key={i} $lead={g.lead}>
                {g.tools.map(([n, label]) => (
                  <Tool key={n} aria-label={label} $active={n === "pan"}><I n={n} /></Tool>
                ))}
              </Cluster>
            ))}
            <EndSlot><Tool $size="narrow" aria-label="More tools"><Chevron dir="right" color="#c8c8c8" /></Tool></EndSlot>
          </MainTools>
        </WindowHead>
        <GroupRow>
          <ToolGroup tools={layerTools} />
          <ToolGroup tools={editTools} />
          <LabelGroups>{labelGroups.map((g, i) => <ToolGroup key={i} tools={g} />)}</LabelGroups>
          {lastTools.map((t) => <ToolGroup key={t[0]} tools={[t]} />)}
        </GroupRow>

        <Body>
          <Side>
            <DockHead $tall><DockTitle>Browser</DockTitle><DockButtons /></DockHead>
            <DockTools>
              <Group>
                {["add", "refresh", "funnel", "collapse", "info"].map((n) => <Tool key={n} $size="small" aria-label={n}><S n={n} /></Tool>)}
              </Group>
            </DockTools>
            <Tree>
              {nodes.map((n) => <Node key={n.label}><Branch open={n.open} /><NodeIcon><S n={n.icon} /></NodeIcon>{n.label}</Node>)}
            </Tree>
            <DockHead><DockTitle>Layers</DockTitle><DockButtons /></DockHead>
            <DockTools>
              <Group>
                {["brush", "group", "eye", "funnel"].map((n) => <Tool key={n} $size="small" aria-label={n}><S n={n} /></Tool>)}
                <FilterExpression />
                <Tool $size="small" aria-label="expand"><S n="expand" /></Tool>
              </Group>
              <EndSlot><Tool $size="narrow" aria-label="More"><Chevron dir="right" color="#c8c8c8" /></Tool></EndSlot>
            </DockTools>
            <LayerList />
          </Side>
          <Canvas aria-label="Map canvas" />
        </Body>

        <StatusBar>
          <Locator>
            <Ico s={14} box={14}><circle cx="5.5" cy="5.5" r="4" stroke="#a0a0a0" strokeWidth="1.4" /><path d="m8.500 8.500 4.500 4.500" stroke="#a0a0a0" strokeWidth="1.8" /></Ico>
            <PlainInput placeholder="Type to locate (Ctrl+K)" aria-label="Type to locate" />
          </Locator>
          <StatusItems>
            <StatusField>Coordinate<StatusBox $w="s" $low><PlainInput defaultValue="0.492°, -0.59°" /></StatusBox></StatusField>
            <GhostButton aria-label="Toggle extents"><Ico s={16} box={16}><path d="M2 1l6 8M6 0l4 7M1 5l5 5" stroke="#eee" strokeWidth="1.8" /><circle cx="10" cy="10.5" r="4.500" fill="#ddd" stroke="#777" /><circle cx="10" cy="10.500" r="1.800" stroke="#222" /><path d="M12 4l3-2M1 13l3-2" stroke="#555" /></Ico></GhostButton>
            <StatusField $lead>Scale<StatusBox $w="l"><Select defaultValue="1:1278122"><option>1:1278122</option></Select><Chevron /></StatusBox></StatusField>
            <GhostButton $lead={6} aria-label="Lock scale"><Ico s={14} h={16} box={14} boxH={16}><path d="M4 8V4.500q3-5 6 0V8" stroke="#ddd" strokeWidth="1.8" /><rect x="1" y="7" width="12" height="8.5" rx="1.5" fill="#6f6f6f" /></Ico></GhostButton>
            <StatusField $lead>Magnifier<StatusBox $w="xl"><PlainInput defaultValue="100%" /><Steps what="magnifier" /></StatusBox></StatusField>
            <StatusField $wide>Rotation<StatusBox $w="m" $low><PlainInput defaultValue="0.0 °" /><Steps what="rotation" /></StatusBox></StatusField>
            <RenderLabel><Check type="checkbox" defaultChecked />Render</RenderLabel>
            <GhostButton><Ico s={14} box={14}><circle cx="7" cy="7" r="6" fill="#c4c4c4" /><path d="M0 7h14M7 1v12M2 4.500h10M2 9.500h10M4.500 2q-2 5 0 10M9.500 2q2 5 0 10" stroke="#6a6a6a" strokeWidth=".8" /></Ico>EPSG:4326</GhostButton>
            <GhostButton $lead={16} aria-label="Messages"><Ico s={16} box={16}><path d="M8 1.500c4.500 0 8 2.500 8 6 0 2-1 3.500-2 4.500l1.500 3L10 13.300C4 14 0 11.500 0 7.500c0-3.500 3.500-6 8-6z" fill="#6f6f6f" /><g fill="#fff"><circle cx="4.5" cy="7.5" r="1.1" /><circle cx="8" cy="7.5" r="1.1" /><circle cx="11.5" cy="7.5" r="1.1" /></g></Ico></GhostButton>
          </StatusItems>
        </StatusBar>

        <FileDialog />
      </Window>
    </Desktop>
  );
}
